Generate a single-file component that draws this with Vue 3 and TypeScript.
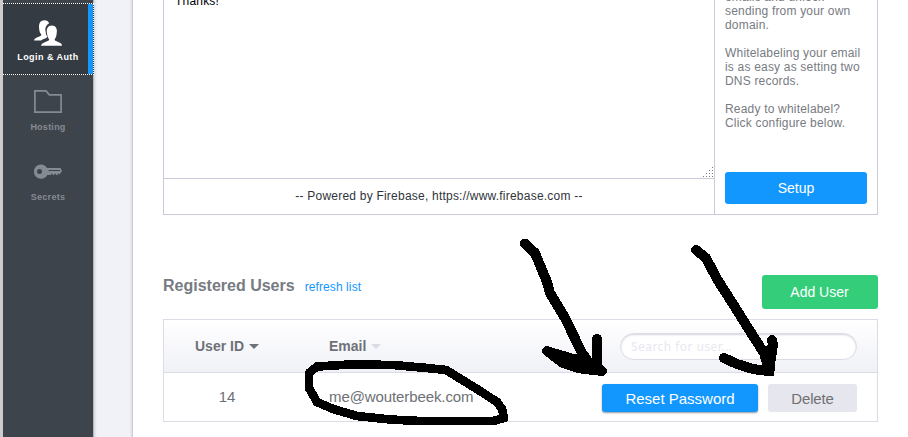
<script setup lang="ts">
import { ref } from 'vue'

interface NavItem { id: string; label: string; active?: boolean }
interface User { id: number; email: string }

const nav: NavItem[] = [
  { id: 'auth', label: 'Login & Auth', active: true },
  { id: 'hosting', label: 'Hosting' },
  { id: 'secrets', label: 'Secrets' },
]
const users: User[] = [{ id: 14, email: 'me@wouterbeek.com' }]
const search = ref('')
</script>

<template>
  <div class="page">
    <nav class="sidebar">
      <a v-for="item in nav" :key="item.id" class="nav-item" :class="[item.id, { active: item.active }]">
        <svg v-if="item.id === 'auth'" class="icon" viewBox="0 0 28 27">
          <path fill="#fff" d="M0 20.500c.3-2 1.500-2.500 4-3.500 2-.6 3.300-1 3.300-2.400C5.900 13 5.300 11 5.200 9 4.300 3.500 6.500.2 10.500.2c2.300 0 3.900 1 4.700 3.100-3.400 1.800-4.500 5.200-3.400 9.200 0 1.800.7 3 1.500 4-.3 1.600-2.300 2-4.300 2.700L7 20.500z" />
          <path fill="#fff" d="M7 25.700c.3-2.200 1.800-2.800 4.500-3.800 2.200-.7 3.700-1.100 3.700-2.600-1.500-1.700-2-3.500-2.100-5.500C11.900 8.800 14 5.600 17.800 5.600s6 3.200 4.800 8.200c-.1 2-.6 3.800-2 5.500 0 1.500 1.200 1.900 3.500 2.600 2.600.9 3.900 1.600 3.900 3.800z" />
        </svg>
        <svg v-else-if="item.id === 'hosting'" class="icon" viewBox="0 0 28 27">
          <path fill="none" stroke="#858b93" stroke-width="1.700" d="M.9 1.900H12l3.300 4H27.100V23.100H.9z" />
        </svg>
        <svg v-else class="icon" viewBox="0 0 28 27">
          <path fill="#858b93" fill-rule="evenodd" d="M7 5.500c2.700 0 4.800 1.300 6 3.500h13.500L28 12l-2.500 3.500-1.500-1-1 2-2-2-1.500 2-1.500-2-1.500 1.500H13.200C12 18.500 9.700 19.800 7 19.800A7 7 0 0 1 0 12.700 7 7 0 0 1 7 5.500zM5.500 10a2.500 2.500 0 1 0 0 5 2.500 2.500 0 0 0 0-5zM14.500 11v1H26v-1z" />
        </svg>
        <span class="nav-label">{{ item.label }}</span>
      </a>
    </nav>
    <div class="gutter"></div>

    <main class="content">
      <section class="mail-panel">
        <div class="editor">
          <div class="message">
            <span>Thanks!</span>
            <svg class="grip" viewBox="0 0 11 11">
              <path fill="#777" d="M9 0h1v1H9zM9 3h1v1H9zM9 6h1v1H9zM9 9h1v1H9zM6 3h1v1H6zM6 6h1v1H6zM6 9h1v1H6zM3 6h1v1H3zM3 9h1v1H3zM0 9h1v1H0z" />
            </svg>
          </div>
          <div class="powered">-- Powered by Firebase, https://www.firebase.com --</div>
        </div>
        <aside class="whitelabel">
          <p>emails and unlock<br>sending from your own<br>domain.</p>
          <p>Whitelabeling your email<br>is as easy as setting two<br>DNS records.</p>
          <p>Ready to whitelabel?<br>Click configure below.</p>
          <button class="btn setup">Setup</button>
        </aside>
      </section>

      <header class="users-header">
        <h2>Registered Users</h2>
        <a class="refresh">refresh list</a>
        <button class="btn add">Add User</button>
      </header>

      <section class="users">
        <div class="row head">
          <div class="col-id">User ID<i class="caret"></i></div>
          <div class="col-email">Email<i class="caret light"></i></div>
          <input v-model="search" class="search" placeholder="Search for user...">
        </div>
        <div v-for="user in users" :key="user.id" class="row body">
          <div class="col-id">{{ user.id }}</div>
          <div class="col-email">{{ user.email }}</div>
          <button class="btn reset">Reset Password</button>
          <button class="btn delete">Delete</button>
        </div>
      </section>
    </main>

    <svg class="marks" viewBox="0 0 908 437" shape-rendering="crispEdges">
      <g fill="none" stroke="#000" stroke-width="10" stroke-linecap="round" stroke-linejoin="round">
        <path d="M525 243.500L535 253 547 282 550 293 565 318 582 353 590 364M597 339V367L602 371" />
        <path d="M547 351L562 360 578 366 601 371" />
        <path d="M696 250L706 258 717 279 733 304 748 328 764 353 768 367M772 340L773 345 769 370" />
        <path d="M724 358L737 364 753 369 768 371" />
        <path stroke-width="8.700" d="M446 370L427 368 393 365 350 364.500 317 366.500 309 373V388L317 402 333 409 357 416 390 419.500 420 421H493L504 418 502 409 497 402 477 389 446 370" />
      </g>
      <path d="M547 346L574 354 582 353 592 360 602 376 577 373 560 367 543 354zM762 352L768 344 777 345 774 376H764z" />
    </svg>
  </div>
</template>

<style>
body { margin: 0; background: #fff; }
</style>

<style scoped>
.page { position: relative; display: flex; width: 908px; height: 437px; overflow: hidden; font-family: "Liberation Sans", Arial, sans-serif; background: #fff; }
.sidebar { box-sizing: border-box; width: 94px; flex: none; padding-top: 3px; border-left: 3px solid #aaa; border-image: linear-gradient(90deg, #ccc, #bbb 60%, #777) 1; border-right: 0; background: linear-gradient(90deg, #3d444c 90px, #b4b7bc 90px); }
.nav-item { box-sizing: border-box; display: flex; flex-direction: column; align-items: center; height: 70px; padding: 14px 1px 0 0; color: #858b93; }
.nav-item.active { height: 72px; padding: 16px 0 0; color: #fff; background: #343b42; border-top: 1px dotted #fff; border-bottom: 1px dotted #fff; border-right: 1px dotted #fff; box-shadow: inset -5px 0 #1297ff; }
.icon { width: 28px; height: 27px; }
.nav-label { margin-top: 4px; font-size: 9px; line-height: 12px; font-weight: bold; letter-spacing: .25px; white-space: nowrap; }
.hosting .nav-label, .secrets .nav-label { margin-top: 5px; }
.active .nav-label { letter-spacing: .45px; }
.gutter { box-sizing: border-box; width: 39px; flex: none; background: linear-gradient(90deg, #d8dadf, #f0f2f7 3px); border-right: 1px solid #cbcdd5; box-shadow: inset -2px 0 2px -1px #dcdee4; }
.content { width: 715px; margin-left: 30px; }
.mail-panel { box-sizing: border-box; display: flex; height: 215px; border: 1px solid #c9cada; border-top: 0; }
.editor { box-sizing: border-box; width: 551px; border-right: 1px solid #c9cada; }
.message { box-sizing: border-box; display: flex; justify-content: space-between; height: 179px; padding: 0 0 0 11px; border-bottom: 1px solid #c9cada; font-size: 12px; line-height: 14px; letter-spacing: .2px; }
.message span { margin-top: -6px; }
.grip { width: 11px; height: 11px; align-self: flex-end; }
.powered { height: 35px; text-align: center; font-size: 12px; line-height: 34px; letter-spacing: .22px; color: #30343a; }
.whitelabel { flex: 1; padding: 0 10px; color: #777b82; font-size: 12px; line-height: 14px; letter-spacing: .19px; white-space: nowrap; }
.whitelabel p { margin: 0 0 14px; }
.whitelabel p:first-child { margin-top: -10px; }
.whitelabel p:nth-child(3) { margin-bottom: 42px; }
.btn { display: block; box-sizing: border-box; padding: 0; border: 0; border-radius: 3px; font: 14px "Liberation Sans", Arial, sans-serif; color: #fff; background: #1297ff; }
.setup { width: 142px; height: 32px; }
.users-header { display: flex; align-items: baseline; height: 34px; margin-top: 60px; }
h2 { margin: 1px 0 0; font-size: 16px; line-height: 20px; color: #777b82; }
.refresh { margin-left: 10px; font-size: 12px; letter-spacing: .1px; color: #1297ff; }
.add { width: 116px; height: 34px; margin-left: auto; padding-right: 1px; align-self: flex-start; background: #34ce7b; }
.users { box-sizing: border-box; height: 103px; margin-top: 10px; border: 1px solid #dcdce7; }
.row { box-sizing: border-box; display: flex; align-items: center; padding-right: 20px; }
.head { height: 53px; border-bottom: 1px solid #dcdce7; background: linear-gradient(#fff, #f0f1f7); font-size: 14px; font-weight: bold; color: #6d7178; }
.body { height: 48px; font-size: 15px; color: #6d7075; }
.col-id { width: 126px; text-align: center; }
.col-email { flex: 1; padding-left: 39px; }
.body .col-id, .body .col-email { padding-bottom: 1px; }
.body .col-email { letter-spacing: -.1px; }
.caret { display: inline-block; margin-left: 5px; border: 5px solid transparent; border-top-color: #6d7178; border-bottom: 0; vertical-align: 2px; }
.caret.light { border-top-color: #dcdce7; }
.search { box-sizing: border-box; width: 237px; height: 27px; padding: 0 10px; border: 1px solid #dcdce7; border-radius: 14px; outline: 0; background: #fff; box-shadow: inset 0 1px 2px #d5d6e0; font: 12px "Noto Sans", sans-serif; letter-spacing: .45px; }
.search::placeholder { color: #e7e8ef; opacity: 1; }
.reset, .delete { height: 28px; margin-top: 2px; font-size: 15px; }
.reset { width: 156px; margin-right: 10px; box-shadow: 0 1px 2px #999; }
.delete { width: 89px; color: #707070; background: #e6e6ef; letter-spacing: -.15px; }
.marks { position: absolute; left: 0; top: 0; width: 908px; height: 437px; pointer-events: none; }
</style>
